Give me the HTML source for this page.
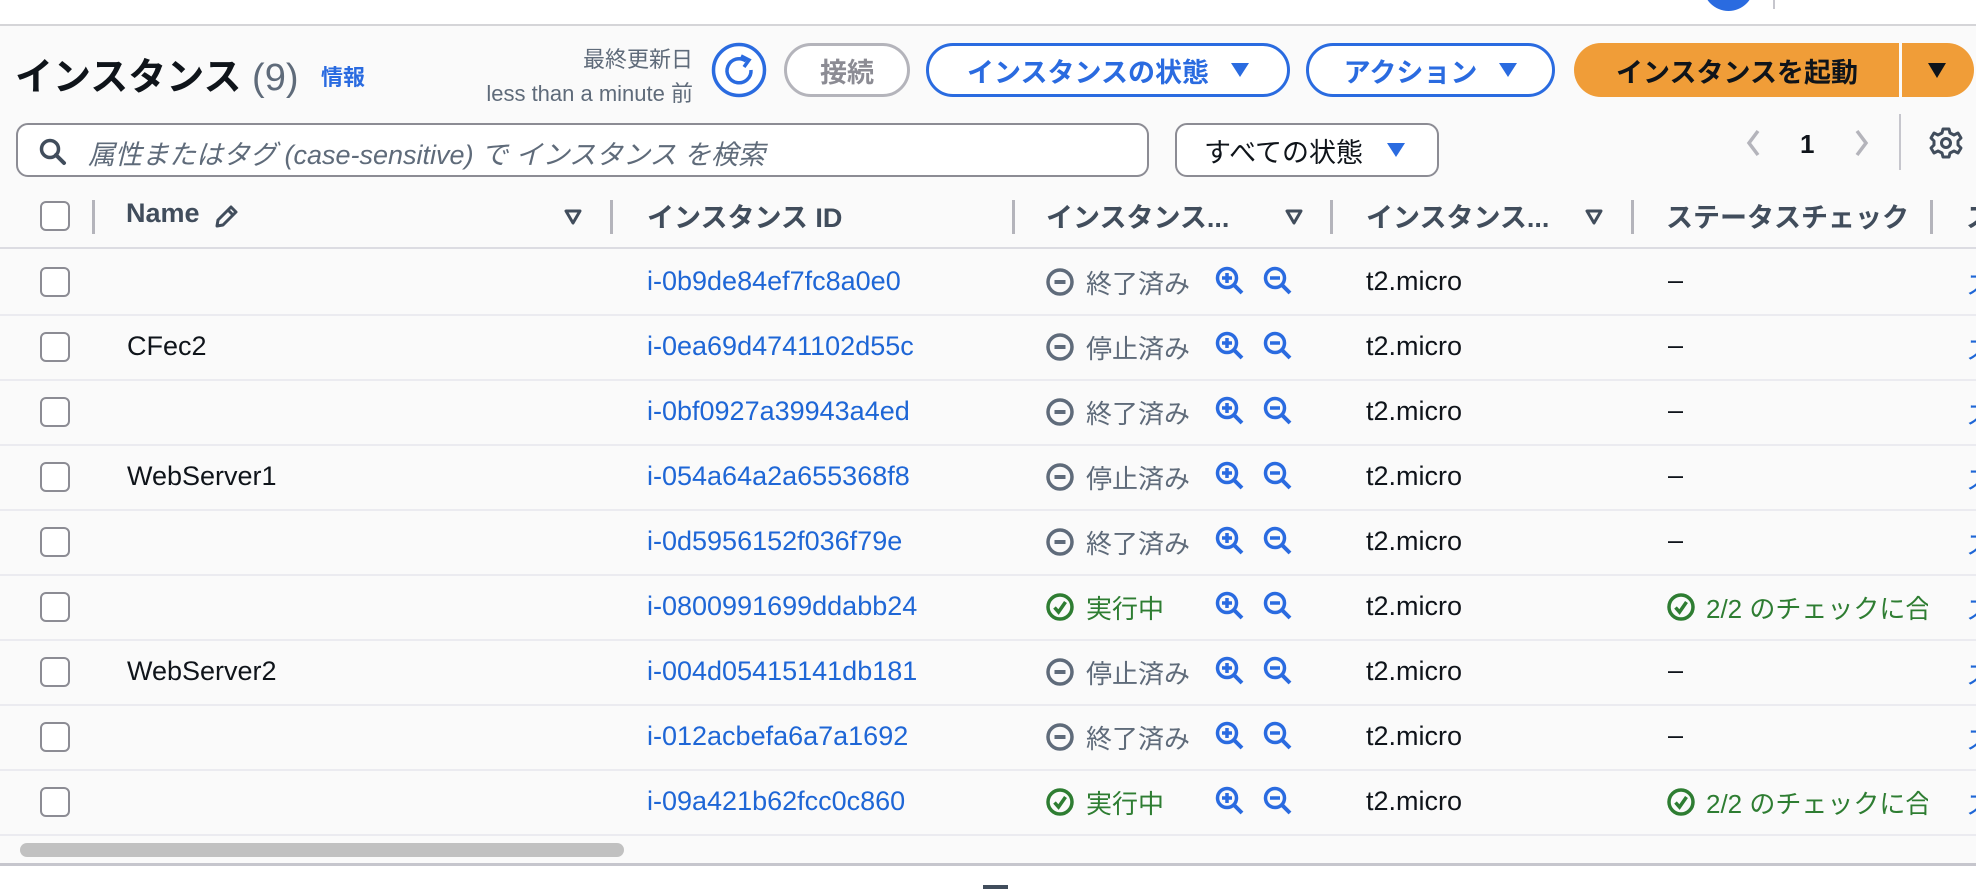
<!DOCTYPE html>
<html><head><meta charset="utf-8">
<style>
*{margin:0;padding:0;box-sizing:border-box}
body{width:1976px;height:890px;overflow:hidden;background:#fff;font-family:"Liberation Sans","Noto Sans CJK JP",sans-serif;position:relative;color:#0f141a}
.a{position:absolute;white-space:nowrap}
#panel{position:absolute;left:0;top:24px;width:1976px;height:842px;background:#fafafa;border-top:2px solid #d5d5d8;border-bottom:3px solid #c6c6cd}
.btn{position:absolute;top:43px;height:54px;border-radius:27px;border:3px solid #2a6be0;color:#2a6be0;font-weight:bold;font-size:27px;display:flex;align-items:center;justify-content:center;background:#fff}
.tri{display:inline-block;width:0;height:0;border-left:9px solid transparent;border-right:9px solid transparent;border-top:14px solid #2a6be0;margin-left:22px}
.hd{position:absolute;top:196px;font-size:27px;font-weight:bold;color:#414d5c}
.vd{position:absolute;top:200px;width:3px;height:34px;background:#b4b4bb}
.line{position:absolute;left:0;width:1976px;height:2px;background:#ebebf0}
.cb{position:absolute;left:40px;width:30px;height:30px;border:2px solid #8c8c94;border-radius:6px;background:#fff}
.txt{position:absolute;font-size:27px}
.jp{font-size:26px}
.id{color:#1e66d6}
.st{color:#5f6b7a}
.ok{color:#2e7d32}
</style></head><body>
<div id="panel"></div>
<div class="a" style="left:1703px;top:-40px;width:51px;height:51px;border-radius:50%;background:#2a6be0"></div>
<div class="a" style="left:1773px;top:0;width:2px;height:9px;background:#c6c6cd"></div>

<div class="a" style="left:15px;top:46px;font-size:38px;font-weight:bold;color:#0f141a">インスタンス <span style="font-weight:normal;color:#5f6b7a">(9)</span></div>
<div class="a" style="left:321px;top:60px;font-size:22px;font-weight:bold;color:#2a6be0">情報</div>
<div class="a" style="right:1283px;top:42px;font-size:22px;color:#5f6b7a;text-align:right">最終更新日</div>
<div class="a" style="right:1283px;top:76px;font-size:22px;color:#5f6b7a;text-align:right">less than a minute 前</div>
<svg class="a" style="left:711px;top:42px" width="56" height="56" viewBox="0 0 56 56"><circle cx="28" cy="28" r="25.5" fill="#fff" stroke="#2a6be0" stroke-width="3.5"/><path d="M35 19 A12 12 0 1 0 40 28" fill="none" stroke="#2a6be0" stroke-width="3.5"/><path d="M30 14 L38 18 L33 25" fill="none" stroke="#2a6be0" stroke-width="3.5"/></svg>
<div class="btn" style="left:784px;width:126px;border-color:#b4b4bb;color:#8c8c94">接続</div>
<div class="btn" style="left:926px;width:364px">インスタンスの状態<span class="tri"></span></div>
<div class="btn" style="left:1306px;width:249px">アクション<span class="tri"></span></div>
<div class="a" style="left:1574px;top:43px;width:400px;height:54px;border-radius:27px;background:#f09d38"></div>
<div class="a" style="left:1574px;top:43px;width:326px;height:54px;font-size:27px;font-weight:bold;display:flex;align-items:center;justify-content:center">インスタンスを起動</div>
<div class="a" style="left:1899px;top:43px;width:3px;height:54px;background:#fafafa"></div>
<div class="a" style="left:1928px;top:63px;width:0;height:0;border-left:9px solid transparent;border-right:9px solid transparent;border-top:15px solid #0f141a"></div>

<div class="a" style="left:16px;top:123px;width:1133px;height:54px;border:2px solid #8c8c94;border-radius:12px;background:#fff"></div>
<svg class="a" style="left:38px;top:137px" width="30" height="30" viewBox="0 0 30 30"><circle cx="12" cy="12" r="8.5" fill="none" stroke="#414d5c" stroke-width="3.5"/><path d="M18 18 L26 26" stroke="#414d5c" stroke-width="4" stroke-linecap="round"/></svg>
<div class="a" style="left:88px;top:133px;font-size:27px;font-style:italic;color:#5f6b7a">属性またはタグ (case-sensitive) で インスタンス を検索</div>
<div class="a" style="left:1175px;top:123px;width:264px;height:54px;border:2px solid #8c8c94;border-radius:12px;background:#fff;font-size:27px;display:flex;align-items:center;padding-left:27px">すべての状態<span class="tri" style="margin-left:24px"></span></div>
<svg class="a" style="left:1742px;top:127px" width="140" height="32" viewBox="0 0 140 32"><path d="M16 4 L7 16 L16 28" fill="none" stroke="#b4b4bb" stroke-width="3.5"/><path d="M115 4 L124 16 L115 28" fill="none" stroke="#b4b4bb" stroke-width="3.5"/><text x="58" y="26" font-family="Liberation Sans" font-size="26" font-weight="bold" fill="#0f141a">1</text></svg>
<div class="a" style="left:1899px;top:114px;width:2px;height:56px;background:#c6c6cd"></div>
<svg class="a" style="left:1929px;top:126px" width="34" height="34" viewBox="-17 -17 34 34"><path d="M-3,-14 L3,-14 L4,-10 L8,-8 L12,-10 L15,-5 L12,-2 L12,2 L15,5 L12,10 L8,8 L4,10 L3,14 L-3,14 L-4,10 L-8,8 L-12,10 L-15,5 L-12,2 L-12,-2 L-15,-5 L-12,-10 L-8,-8 L-4,-10 Z" fill="none" stroke="#414d5c" stroke-width="3" stroke-linejoin="round"/><circle r="4.5" fill="none" stroke="#414d5c" stroke-width="3"/></svg>

<div class="cb" style="top:201px"></div>
<div class="vd" style="left:92px"></div>
<div class="hd" style="left:126px;top:198px">Name</div>
<svg class="a" style="left:212px;top:203px" width="28" height="28" viewBox="0 0 28 28"><path d="M5 23 L6 17 L19 4 L24 9 L11 22 Z M16 7 L21 12" fill="none" stroke="#414d5c" stroke-width="3" stroke-linejoin="round"/></svg>
<svg class="a" style="left:564px;top:209px" width="18" height="16" viewBox="0 0 18 16"><path d="M2 2 L16 2 L9 14 Z" fill="none" stroke="#414d5c" stroke-width="3" stroke-linejoin="round"/></svg>
<div class="vd" style="left:610px"></div>
<div class="hd" style="left:647px">インスタンス ID</div>
<div class="vd" style="left:1012px"></div>
<div class="hd" style="left:1046px">インスタンス...</div>
<svg class="a" style="left:1285px;top:209px" width="18" height="16" viewBox="0 0 18 16"><path d="M2 2 L16 2 L9 14 Z" fill="none" stroke="#414d5c" stroke-width="3" stroke-linejoin="round"/></svg>
<div class="vd" style="left:1330px"></div>
<div class="hd" style="left:1366px">インスタンス...</div>
<svg class="a" style="left:1585px;top:209px" width="18" height="16" viewBox="0 0 18 16"><path d="M2 2 L16 2 L9 14 Z" fill="none" stroke="#414d5c" stroke-width="3" stroke-linejoin="round"/></svg>
<div class="vd" style="left:1631px"></div>
<div class="hd" style="left:1666px;width:258px;overflow:hidden">ステータスチェック</div>
<div class="vd" style="left:1930px"></div>
<div class="hd" style="left:1966px">ス</div>
<div class="line" style="top:247px;background:#dcdce2"></div>

<svg width="0" height="0" style="position:absolute"><defs>
<g id="zp"><circle cx="12" cy="12" r="9.5" fill="none" stroke="#2a6be0" stroke-width="3.5"/><path d="M19 19 L27 27" stroke="#2a6be0" stroke-width="4"/><path d="M7 12 H17 M12 7 V17" stroke="#2a6be0" stroke-width="3.5"/></g>
<g id="zm"><circle cx="12" cy="12" r="9.5" fill="none" stroke="#2a6be0" stroke-width="3.5"/><path d="M19 19 L27 27" stroke="#2a6be0" stroke-width="4"/><path d="M7 12 H17" stroke="#2a6be0" stroke-width="3.5"/></g>
<g id="stop"><circle cx="14" cy="14" r="12" fill="none" stroke="#5f6b7a" stroke-width="3.5"/><path d="M8.5 14 H19.5" stroke="#5f6b7a" stroke-width="4"/></g>
<g id="run"><circle cx="14" cy="14" r="12" fill="none" stroke="#2e7d32" stroke-width="3.5"/><path d="M8.5 14.5 L12.5 19 L19.5 9" fill="none" stroke="#2e7d32" stroke-width="3.5"/></g>
</defs></svg>

<div id="rows"></div>
<script>
var d=[["","i-0b9de84ef7fc8a0e0","t"],["CFec2","i-0ea69d4741102d55c","s"],["","i-0bf0927a39943a4ed","t"],["WebServer1","i-054a64a2a655368f8","s"],["","i-0d5956152f036f79e","t"],["","i-0800991699ddabb24","r"],["WebServer2","i-004d05415141db181","s"],["","i-012acbefa6a7a1692","t"],["","i-09a421b62fcc0c860","r"]];
var h="";
d.forEach(function(r,i){var top=250+i*65,c=top+32;
h+='<div class="cb" style="top:'+(c-15)+'px"></div>';
if(r[0])h+='<div class="txt" style="left:127px;top:'+(c-16)+'px">'+r[0]+'</div>';
h+='<div class="txt id" style="left:647px;top:'+(c-16)+'px">'+r[1]+'</div>';
var ic=r[2]=="r"?"run":"stop",lab=r[2]=="r"?"実行中":(r[2]=="s"?"停止済み":"終了済み"),cl=r[2]=="r"?"ok":"st";
h+='<svg class="a" style="left:1046px;top:'+(c-14)+'px" width="28" height="28"><use href="#'+ic+'"/></svg>';
h+='<div class="txt jp '+cl+'" style="left:1086px;top:'+(c-18)+'px">'+lab+'</div>';
h+='<svg class="a" style="left:1215px;top:'+(c-16)+'px" width="30" height="30"><use href="#zp"/></svg>';
h+='<svg class="a" style="left:1263px;top:'+(c-16)+'px" width="30" height="30"><use href="#zm"/></svg>';
h+='<div class="txt" style="left:1366px;top:'+(c-16)+'px">t2.micro</div>';
if(r[2]=="r"){h+='<svg class="a" style="left:1667px;top:'+(c-14)+'px" width="28" height="28"><use href="#run"/></svg><div class="txt jp ok" style="left:1706px;top:'+(c-18)+'px;width:222px;overflow:hidden;white-space:nowrap">2/2 のチェックに合格</div>';}
else h+='<div class="txt" style="left:1668px;top:'+(c-17)+'px">–</div>';
h+='<div class="txt jp id" style="left:1966px;top:'+(c-17)+'px">ス</div>';
h+='<div class="line" style="top:'+(top+64)+'px"></div>';
});
document.getElementById("rows").innerHTML=h;
</script>
<div class="a" style="left:20px;top:843px;width:604px;height:14px;border-radius:7px;background:#c1c1c1"></div>
<div class="a" style="left:983px;top:885px;width:25px;height:4px;background:#414d5c"></div>
</body></html>
